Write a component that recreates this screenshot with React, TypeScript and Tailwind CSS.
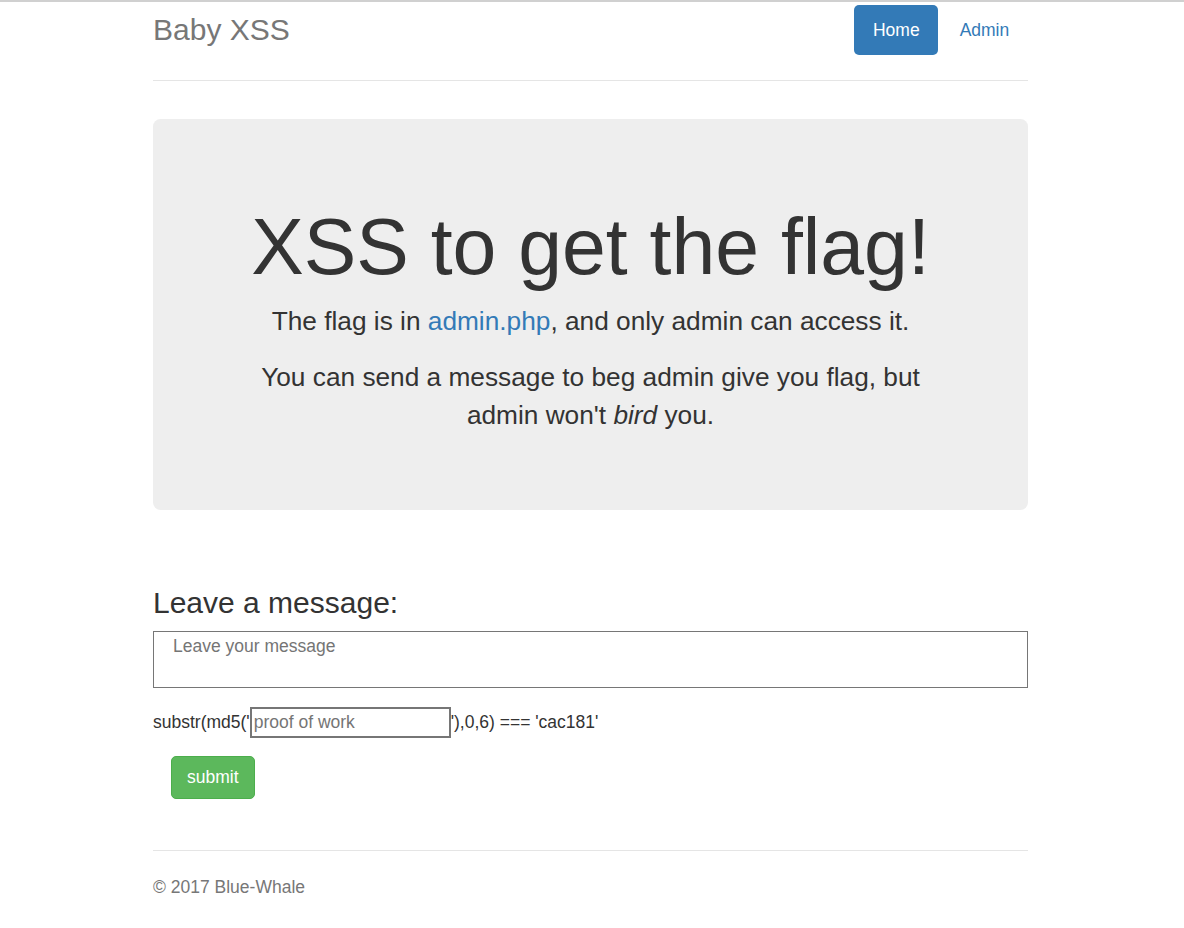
import React from "react";

export default function App() {
  return (
    <div className="min-h-[928px] bg-white border-t-2 border-[#d0d0d0] font-['Liberation_Sans',Arial,Helvetica,sans-serif] text-[#333] text-[17.5px] leading-[25px]">
      <div className="w-[878px] mx-auto pr-[3px]">
        <div className="flex items-start justify-between pt-[3px] pb-[25px] border-b border-[#e5e5e5]">
          <h3 className="text-[30px] leading-[50px] text-[#777] m-0">Baby XSS</h3>
          <nav className="flex">
            <a className="block px-[18.75px] py-[12.5px] leading-[25px] rounded-[5px] bg-[#337ab7] text-white">Home</a>
            <a className="block ml-[2.5px] px-[18.75px] py-[12.5px] leading-[25px] rounded-[5px] text-[#337ab7]">Admin</a>
          </nav>
        </div>

        <div className="mt-[38px] bg-[#eeeeee] rounded-[7.5px] px-[75px] pt-[60px] pb-[57px] text-center">
          <h1 className="mt-[25px] mb-[12.5px] text-[78.75px] leading-[86.625px] text-[#333]">XSS to get the flag!</h1>
          <p className="text-[26.25px] leading-[37.5px] mb-[18.75px]">
            The flag is in <a className="text-[#337ab7]">admin.php</a>, and only admin can access it.
          </p>
          <p className="text-[26.25px] leading-[37.5px] mb-[18.75px]">
            You can send a message to beg admin give you flag, but admin won't <em className="italic">bird</em> you.
          </p>
        </div>

        <h2 className="mt-[76px] text-[30px] leading-[33px] text-[#333]">Leave a message:</h2>
        <textarea
          className="block mt-[12px] w-full h-[57px] border border-[#767676] px-[19px] pt-[4px] text-[17.5px] leading-[20px] placeholder:text-[#757575] resize-none outline-none bg-white"
          placeholder="Leave your message"
        />
        <div className="mt-[19px] flex items-center h-[31px]">
          <span>substr(md5('</span>
          <input
            className="w-[201px] h-[31px] border-2 border-[#767676] px-[2px] text-[17.5px] placeholder:text-[#757575] outline-none bg-white"
            placeholder="proof of work"
          />
          <span>'),0,6) === 'cac181'</span>
        </div>
        <button className="mt-[18px] ml-[18px] h-[43px] px-[15px] border border-[#4cae4c] bg-[#5cb85c] rounded-[5px] text-white text-[17.5px] leading-[25px]">
          submit
        </button>

        <footer className="mt-[51px] border-t border-[#e5e5e5] pt-[23.75px] text-[#777]">
          © 2017 Blue-Whale
        </footer>
      </div>
    </div>
  );
}
